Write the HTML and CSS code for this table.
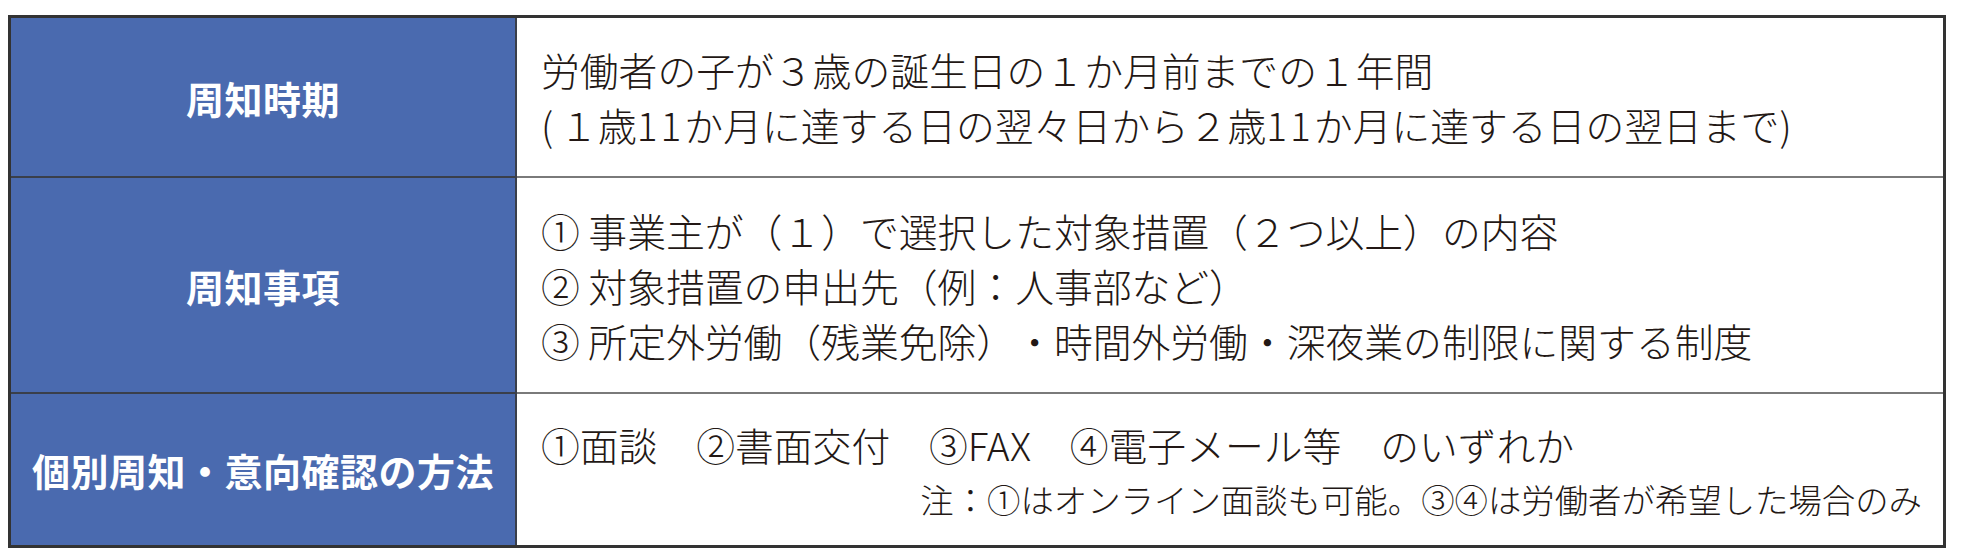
FILE: index.html
```html
<!DOCTYPE html>
<html lang="ja">
<head>
<meta charset="utf-8">
<title>周知</title>
<link rel="stylesheet" href="styles.css">
</head>
<body>
<div class="sheet">
  <div class="grid">
    <div class="head row1">周知時期</div>
    <div class="body row1">
      <p class="line">労働者の子が３歳の誕生日の１か月前までの１年間</p>
      <p class="line"><span class="paren">(</span>１歳<span class="num">11</span>か月に達する日の翌々日から２歳<span class="num">11</span>か月に達する日の翌日まで)</p>
    </div>
    <div class="head row2">周知事項</div>
    <div class="body row2">
      <p class="line">① 事業主が（１）で選択した対象措置（２つ以上）の内容</p>
      <p class="line">② 対象措置の申出先（例：人事部など）</p>
      <p class="line">③ 所定外労働（残業免除）・時間外労働・深夜業の制限に関する制度</p>
    </div>
    <div class="head row3">個別周知・意向確認の方法</div>
    <div class="body row3">
      <p class="line">①面談　②書面交付　③FAX　④電子メール等　のいずれか</p>
      <p class="note">注：①はオンライン面談も可能。③④は労働者が希望した場合のみ</p>
    </div>
  </div>
</div>
</body>
</html>
```

FILE: styles.css
```css
html, body {
  margin: 0;
  padding: 0;
  background: #ffffff;
}

body {
  font-family: "Noto Sans CJK JP", "Noto Sans", sans-serif;
  color: #231815;
  text-spacing-trim: space-all;
}

.sheet {
  padding: 15px 0 0 8px;
}

.grid {
  width: 1932px;
  border: 3px solid #333333;
  display: grid;
  grid-template-columns: 506px 1fr;
  grid-template-rows: 160px 216px 151px;
}

.head {
  background: #4a6aaf;
  color: #ffffff;
  font-weight: 700;
  font-size: 38px;
  display: flex;
  align-items: center;
  justify-content: center;
  border-right: 2px solid #3a3f4a;
  letter-spacing: 0.5px;
  text-spacing-trim: space-all;
}

.head.row1,
.head.row2 {
  border-bottom: 2px solid #3a3f4a;
}

.body {
  display: flex;
  flex-direction: column;
  justify-content: center;
  padding-left: 24px;
  padding-right: 21px;
}

.body.row1,
.body.row2 {
  border-bottom: 2px solid #7a7a7a;
}

.line {
  margin: 0;
  font-size: 38.8px;
  font-weight: 300;
  line-height: 55px;
  white-space: nowrap;
  text-spacing-trim: space-all;
}

.paren {
  margin-right: 6px;
}

.num {
  letter-spacing: 3px;
}

.note {
  margin: 0;
  font-size: 33.4px;
  font-weight: 300;
  line-height: 54px;
  text-align: right;
  white-space: nowrap;
  text-spacing-trim: space-all;
}

.body.row3 {
  padding-top: 4px;
}
```
